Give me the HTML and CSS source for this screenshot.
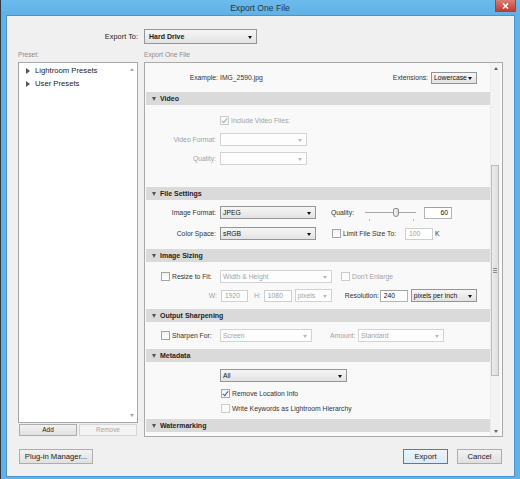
FILE: index.html
```html
<!DOCTYPE html>
<html>
<head>
<meta charset="utf-8">
<link rel="stylesheet" href="styles.css">
</head>
<body>
<div class="titlebar">
  <span></span>
  <span class="title">Export One File</span>
  <span class="close"><svg width="9" height="6" viewBox="0 0 9 6"><path d="M2 0.5 L7 5.5 M7 0.5 L2 5.5" stroke="#fff" stroke-width="1.6"/></svg></span>
</div>
<div class="client">
  <div class="exp-label">Export To:</div>
  <div class="exp-ctrl"><div class="dd dd-main"><b>Hard Drive</b></div></div>

  <div class="cap">Preset:</div>
  <div class="cap">Export One File</div>

  <div class="leftcol">
    <div class="listbox">
      <div class="tree">
        <div class="item"><i class="tri-r"></i>Lightroom Presets</div>
        <div class="item"><i class="tri-r"></i>User Presets</div>
      </div>
      <div class="lscroll"><i class="up lt"></i><i class="down lt"></i></div>
    </div>
    <div class="listbtns">
      <button class="btn small">Add</button>
      <button class="btn small off">Remove</button>
    </div>
  </div>

  <div class="panel">
    <div class="pcontent">
      <div class="toprow">
        <span class="ex-lab">Example:</span><span class="ex-val">IMG_2590.jpg</span>
        <span class="ext-lab">Extensions:</span>
        <div class="dd w46">Lowercase</div>
      </div>

      <div class="hdr"><i class="tri-d"></i>Video</div>
      <div class="body b-video">
        <div class="row"><span class="lab"></span><span class="cb off checked"></span><span class="cbt off">Include Video Files:</span></div>
        <div class="row"><span class="lab off">Video Format:</span><div class="dd off w87"></div></div>
        <div class="row"><span class="lab off">Quality:</span><div class="dd off w87"></div></div>
      </div>

      <div class="hdr"><i class="tri-d"></i>File Settings</div>
      <div class="body b-file">
        <div class="row">
          <span class="lab">Image Format:</span><div class="dd w96">JPEG</div>
          <span class="q-lab">Quality:</span>
          <div class="slider"><span class="track"></span><span class="thumb"></span><span class="tick t1"></span><span class="tick t2"></span></div>
          <div class="inp w28 right">60</div>
        </div>
        <div class="row">
          <span class="lab">Color Space:</span><div class="dd w96">sRGB</div>
          <span class="cb ml16"></span><span class="cbt limit">Limit File Size To:</span>
          <div class="inp w28 off">100</div><span class="k">K</span>
        </div>
      </div>

      <div class="hdr"><i class="tri-d"></i>Image Sizing</div>
      <div class="body b-size">
        <div class="row">
          <span class="cbgroup"><span class="cb"></span><span class="cbt">Resize to Fit:</span></span>
          <div class="dd off w112">Width &amp; Height</div>
          <span class="cb off ml9"></span><span class="cbt off">Don't Enlarge</span>
        </div>
        <div class="row">
          <span class="lab lab-w off">W:</span><div class="inp off w27">1920</div>
          <span class="hl off">H:</span><div class="inp off w28">1080</div>
          <div class="dd off w37 ml3">pixels</div>
          <span class="res-lab">Resolution:</span><div class="inp w28">240</div>
          <div class="dd w66 ml3">pixels per inch</div>
        </div>
      </div>

      <div class="hdr"><i class="tri-d"></i>Output Sharpening</div>
      <div class="body b-sharp">
        <div class="row">
          <span class="cbgroup"><span class="cb"></span><span class="cbt">Sharpen For:</span></span>
          <div class="dd off w92">Screen</div>
          <span class="amt-lab off">Amount:</span>
          <div class="dd off w86">Standard</div>
        </div>
      </div>

      <div class="hdr"><i class="tri-d"></i>Metadata</div>
      <div class="body b-meta">
        <div class="row"><span class="lab"></span><div class="dd w127">All</div></div>
        <div class="row r14 mt4"><span class="pad75"></span><span class="cb checked"></span><span class="cbt">Remove Location Info</span></div>
        <div class="row r14 mt1"><span class="pad75"></span><span class="cb off"></span><span class="cbt">Write Keywords as Lightroom Hierarchy</span></div>
      </div>

      <div class="hdr"><i class="tri-d"></i>Watermarking</div>
    </div>
    <div class="pscroll">
      <div class="sb-end"><i class="up"></i></div>
      <div class="sb-track"><div class="thumb-v"><span class="grip"></span></div></div>
      <div class="sb-end"><i class="down"></i></div>
    </div>
  </div>

  <div class="foot-left"><button class="btn big plug">Plug-in Manager...</button></div>
  <div class="foot-right">
    <button class="btn big def">Export</button>
    <button class="btn big">Cancel</button>
  </div>
</div>
</body>
</html>
```

FILE: styles.css
```css
* { box-sizing: border-box; margin: 0; padding: 0; }
html, body { width: 520px; height: 479px; overflow: hidden; }
body {
  background: #62b2e7;
  font-family: "Liberation Sans", Arial, sans-serif;
  color: #222;
  padding: 0 6px 3px 6px;
  border-left: 1px solid #2c3a46;
  display: flex;
  flex-direction: column;
}

/* title bar */
.titlebar {
  height: 16px;
  margin: 0 -6px 0 -7px;
  display: grid;
  grid-template-columns: 1fr auto 1fr;
  align-items: start;
  background: linear-gradient(#6dbbec, #5fb0e6);
}
.title { font-size: 8.6px; color: #2a3440; line-height: 16px; }
.close {
  justify-self: end;
  margin-right: 4px;
  width: 21px; height: 12px;
  background: linear-gradient(#dc7d73, #c13c31);
  border: 1px solid #a8433c;
  border-top: none;
  display: flex; align-items: center; justify-content: center;
}

/* client */
.client {
  flex: 1;
  background: #f0f0f0;
  box-shadow: 0 0 0 1px #4b93ca;
  display: grid;
  grid-template-columns: 120px 359px;
  grid-template-rows: 15px 18px 375px 1fr;
  column-gap: 6px;
  padding: 13px 11px 12px 11px;
  font-size: 6.8px;
}
.exp-label { font-size: 7.4px; color: #222; text-align: right; line-height: 15px; }
.exp-ctrl { display: flex; }
.cap { color: #8a8a8a; font-size: 6.6px; line-height: 9px; padding-top: 6px; }

/* dropdowns */
.dd {
  position: relative;
  height: 13px;
  border: 1px solid #959595;
  background: linear-gradient(#f6f6f6, #e3e3e3);
  color: #111;
  line-height: 11px;
  padding-left: 2px;
  white-space: nowrap;
  overflow: hidden;
  flex: none;
}
.dd::after {
  content: "";
  position: absolute;
  right: 4px; top: 50%;
  margin-top: -1px;
  border-left: 2.5px solid transparent;
  border-right: 2.5px solid transparent;
  border-top: 3px solid #111;
}
.dd.off { border-color: #d3d3d3; background: #fdfdfd; color: #a5a5a5; }
.dd.off::after { border-top-color: #b8b8b8; }
.dd-main { width: 113px; height: 15px; line-height: 13px; padding-left: 4px; font-size: 7px; }
.dd-main b { font-weight: bold; color: #1a1a1a; }
.w46 { width: 46px; height: 12px; line-height: 10px; }
.w87 { width: 87px; }
.w96 { width: 96px; }
.w112 { width: 112px; }
.w37 { width: 37px; }
.w66 { width: 66px; }
.w92 { width: 92px; }
.w86 { width: 86px; }
.w127 { width: 127px; }
.ml3 { margin-left: 3px; }

/* inputs */
.inp {
  height: 12px;
  border: 1px solid #b4b4b4;
  border-top-color: #a0a0a0;
  background: #fff;
  color: #111;
  line-height: 10px;
  padding: 0 3px;
  flex: none;
}
.inp.off { color: #9d9d9d; border-color: #cfcfcf; }
.inp.right { text-align: right; }
.w28 { width: 28px; }
.w27 { width: 27px; }

/* checkboxes */
.cb {
  width: 9px; height: 9px;
  border: 1px solid #a4a4a4;
  background: linear-gradient(#f2f2f2, #fff);
  flex: none;
  position: relative;
}
.cb.off { border-color: #cbcbcb; background: #fbfbfb; }
.cb.checked::after {
  content: "";
  position: absolute;
  left: 2px; top: 0px;
  width: 2px; height: 5px;
  border-right: 1.2px solid #3f5a9a;
  border-bottom: 1.2px solid #3f5a9a;
  transform: rotate(40deg);
}
.cb.off.checked::after { border-color: #a9a9a9; }
.cbt { margin-left: 2px; color: #333; white-space: nowrap; }
.cbt.off { color: #a3a3a3; }

/* left column */
.leftcol { display: flex; flex-direction: column; }
.listbox {
  height: 361px;
  border: 1px solid #a7a7a7;
  background: #fff;
  display: flex;
}
.tree { flex: 1; padding-top: 1px; font-size: 7.7px; color: #222; }
.item { height: 13px; line-height: 13px; display: flex; align-items: center; padding-left: 7px; }
.tri-r {
  width: 0; height: 0;
  border-top: 3px solid transparent;
  border-bottom: 3px solid transparent;
  border-left: 4px solid #555;
  margin-right: 5px;
}
.lscroll {
  width: 10px;
  display: flex; flex-direction: column; justify-content: space-between; align-items: center;
  padding: 5px 0 5px;
}
.up, .down { width: 0; height: 0; border-left: 2.5px solid transparent; border-right: 2.5px solid transparent; }
.up { border-bottom: 3px solid #666; }
.down { border-top: 3px solid #666; }
.up.lt { border-bottom-color: #a8a8a8; }
.down.lt { border-top-color: #a8a8a8; }

.listbtns { display: flex; gap: 2px; padding: 0 1px; margin-top: 1px; }
.btn {
  font-family: "Liberation Sans", Arial, sans-serif;
  border: 1px solid #adadad;
  background: linear-gradient(#f2f2f2, #e0e0e0);
  color: #1a1a1a;
  flex: none;
}
.btn.small { width: 58px; height: 12px; font-size: 6.4px; line-height: 10px; }
.btn.small.off { background: #f4f4f4; border-color: #d6d6d6; color: #a4a4a4; }
.btn.big { height: 15px; font-size: 7.7px; line-height: 13px; }

/* panel */
.panel {
  border: 1px solid #a9a9a9;
  background: #f9f9f9;
  display: flex;
  padding: 0 1px;
}
.pcontent { flex: 1; min-width: 0; display: flex; flex-direction: column; color: #333; }
.toprow { height: 29px; display: flex; align-items: center; padding-right: 13px; }
.ex-lab { width: 72px; text-align: right; }
.ex-val { margin-left: 2px; }
.ext-lab { margin-left: auto; margin-right: 3px; }

.hdr {
  height: 13px;
  background: #dadada;
  display: flex; align-items: center;
  padding-left: 6px;
  font-weight: bold;
  font-size: 7px;
  color: #1e1e1e;
  flex: none;
}
.tri-d {
  width: 0; height: 0;
  border-left: 2.5px solid transparent;
  border-right: 2.5px solid transparent;
  border-top: 4px solid #555;
  margin-right: 4px;
}
.body { display: flex; flex-direction: column; flex: none; }
.row { height: 13px; display: flex; align-items: center; white-space: nowrap; }
.r14 { height: 14px; }
.mt4 { margin-top: 4px; }
.mt1 { margin-top: 1px; }
.lab { width: 70px; margin-right: 4px; text-align: right; flex: none; }
.lab.off { color: #a3a3a3; }
.b-video { height: 82px; padding-top: 9px; gap: 6px; }
.b-file { height: 49px; padding-top: 6px; gap: 8px; }
.b-size { height: 47px; padding-top: 8px; gap: 6px; }
.b-sharp { height: 27px; padding-top: 7px; }
.b-meta { height: 57px; padding-top: 7px; }
.pad75 { width: 75px; flex: none; }

.q-lab { margin-left: 15px; width: 34px; flex: none; }
.slider { position: relative; width: 51px; height: 13px; flex: none; margin-right: 8px; }
.slider .track { position: absolute; left: 0; right: 0; top: 6px; height: 1px; background: #a8a8a8; }
.slider .thumb {
  position: absolute; left: 28px; top: 2px;
  width: 6px; height: 9px;
  border: 1px solid #8d8d8d;
  border-radius: 2px 2px 3px 3px;
  background: linear-gradient(90deg, #f7f7f7, #dcdcdc);
}
.slider .tick { position: absolute; top: 13px; width: 1px; height: 2px; background: #b8b8b8; }
.slider .t1 { left: 4px; }
.slider .t2 { left: 48px; }
.ml16 { margin-left: 16px; }
.ml9 { margin-left: 9px; }
.limit { width: 62px; flex: none; }
.k { margin-left: 2px; color: #333; }

.cbgroup { width: 74px; padding-left: 15px; display: flex; align-items: center; flex: none; }
.lab-w { width: 71px; margin-right: 4px; }
.hl { margin-left: 6px; margin-right: 3px; color: #a3a3a3; }
.res-lab { margin-left: 13px; width: 35px; flex: none; }
.amt-lab { margin-left: 18px; width: 28px; flex: none; color: #a3a3a3; }

/* panel scrollbar */
.pscroll {
  width: 10px;
  margin-right: 1px;
  background: #f3f3f3;
  border-left: 1px solid #ececec;
  display: flex; flex-direction: column;
}
.sb-end { height: 10px; display: flex; align-items: center; justify-content: center; flex: none; }
.sb-track { flex: 1; padding-top: 92px; }
.thumb-v {
  height: 211px;
  width: 8px;
  border: 1px solid #bdbdbd;
  background: linear-gradient(90deg, #ececec, #dedede);
  display: flex; align-items: center; justify-content: center;
}
.grip { width: 4px; height: 5px; background: repeating-linear-gradient(#8a8a8a 0 1px, transparent 1px 2px); }

/* footer */
.foot-left { display: flex; align-items: flex-end; padding-left: 1px; }
.plug { width: 74px; }
.foot-right { display: flex; align-items: flex-end; justify-content: flex-end; gap: 9px; padding-right: 1px; }
.foot-right .btn { width: 45px; }
.btn.def { border-color: #3d84bd; background: linear-gradient(#eef5fb, #dde9f3); }
```
